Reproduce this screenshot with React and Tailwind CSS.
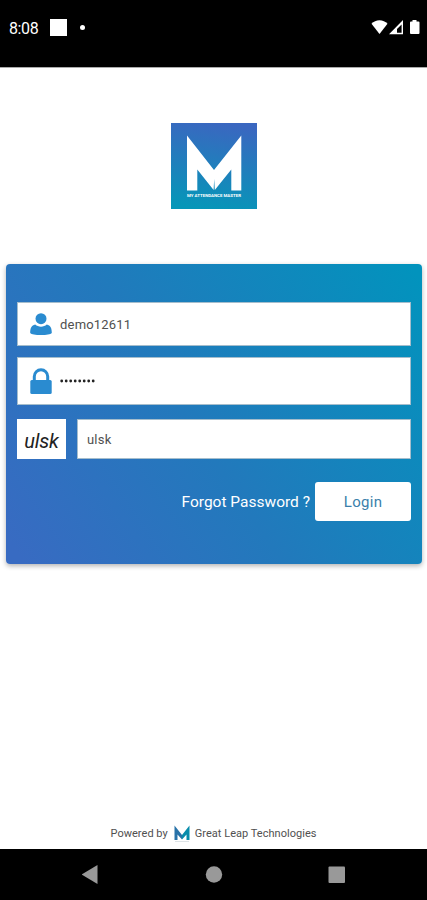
// ============================================
// Login screen - My Attendance Master
// ============================================

// White M, split into a left and a right half
const LogoMark = () => (
  <svg viewBox="0 0 86 86" className="w-[86px] h-[86px]">
    <defs>
      <linearGradient id="logoBg" x1="0.55" y1="0" x2="0.4" y2="1">
        <stop offset="0" stopColor="#3a67c0" />
        <stop offset="1" stopColor="#0696b8" />
      </linearGradient>
    </defs>
    <rect width="86" height="86" fill="url(#logoBg)" />
    <path
      fill="#fff"
      d="M16 12.5 43 47 70.300 12.500V67.500H60.300V46.500L43.800 67 43.200 56 42.600 67 26.300 46.500V67.500H16Z"
    />
    <text
      x="16"
      y="74.300"
      textLength="54"
      lengthAdjust="spacingAndGlyphs"
      fontSize="4"
      fontWeight="700"
      fill="#fff"
    >
      MY ATTENDANCE MASTER
    </text>
  </svg>
);

const SmallLogo = () => (
  <svg viewBox="0 0 16 18" className="w-4 h-[18px]">
    <path fill="#2872a8" d="M0.500 0.500 8 10V14.500L3.500 9.500V15H0.500Z" />
    <path fill="#078cab" d="M15.500 0.500 8 10V14.500L12.500 9.500V15H15.500Z" />
    <path stroke="#dde3e6" strokeWidth="1" d="M1 16.500H15" />
  </svg>
);

const UserIcon = () => (
  <svg viewBox="0 0 22 22" className="w-[22px] h-[22px]" fill="#2a8bd0">
    <circle cx="11" cy="5.700" r="5.500" />
    <path d="M5.200 11.500C6.800 12.900 8.700 13.700 11 13.700S15.200 12.900 16.800 11.500C20.500 12.300 21.800 15 21.800 20C20.500 21.500 16.500 22 11 22S1.500 21.500 0.200 20C0.200 15 1.500 12.300 5.200 11.500Z" />
  </svg>
);

const LockIcon = () => (
  <svg viewBox="0 0 22 26" className="w-[22px] h-[26px]">
    <path d="M4.300 13V8.500a6.700 6.700 0 0 1 13.400 0V13" fill="none" stroke="#2a8bd0" strokeWidth="3" />
    <rect x="0.300" y="12" width="21.400" height="14" rx="1.500" fill="#2a8bd0" />
  </svg>
);

// Masked password, one dot per character
const PasswordDots = () => (
  <svg viewBox="0 0 36 4" className="w-[36px] h-[4px] ml-[8px]" fill="#222">
    {Array.from({ length: 8 }, (_, i) => (
      <circle key={i} cx={1.7 + i * 4.5} cy="2" r="1.400" />
    ))}
  </svg>
);

const StatusBar = () => (
  <header className="h-[67px] shrink-0 bg-black flex items-start justify-between pt-[18px] pl-[9px] pr-[7px] text-white">
    <div className="flex items-center h-[19px]">
      <span className="w-[30px] pt-[2px] text-[16px] tracking-[-0.4px] leading-[19px] whitespace-nowrap">8:08</span>
      <span className="w-[17px] h-[17px] ml-[11px] bg-white" />
      <span className="w-[5px] h-[5px] ml-[13px] rounded-full bg-white" />
    </div>
    <svg viewBox="0 0 50 19" className="w-[50px] h-[19px]" fill="#fff">
      <path d="M1.500 5.800C5.500 1 13.500 1 17.500 5.800L9.500 16Z" />
      <path fillRule="evenodd" d="M33 2V16.300H19ZM31.600 6.500 27 11V14.800H31.600Z" />
      <path d="M42.500 2H46.500V3.500H48.500Q49.500 3.500 49.500 4.500V15Q49.500 16 48.500 16H41Q40 16 40 15V4.500Q40 3.500 41 3.500H42.500Z" />
    </svg>
  </header>
);

const LoginCard = () => (
  <section className="w-[416px] h-[300px] ml-[6px] mt-[55px] pt-[38px] px-[11px] rounded-[4px] bg-[linear-gradient(56deg,#386bc2_3%,#2279bc_45%,#0293bd_98%)] shadow-[0_2px_5px_rgba(0,0,0,0.3)]">
    <div className="h-[44px] pl-[12px] flex items-center bg-white border border-[#a5bdcc]">
      <UserIcon />
      <span className="ml-[8px] pt-[2px] text-[13px] tracking-[0.2px] text-[#505050]">demo12611</span>
    </div>
    <div className="h-[48px] mt-[11px] pl-[12px] flex items-center bg-white border border-[#a5bdcc]">
      <LockIcon />
      <PasswordDots />
    </div>
    <div className="mt-[14px] flex items-start gap-[11px]">
      <div className="w-[49px] h-[40px] pt-[3px] flex items-center justify-center bg-white text-[20px] tracking-[-0.2px] italic text-[#222]">
        ulsk
      </div>
      <div className="flex-1 h-[40px] pl-[9px] pt-[2px] flex items-center bg-white border border-[#a5bdcc] text-[13px] tracking-[0.2px] text-[#505050]">
        ulsk
      </div>
    </div>
    <div className="mt-[23px] flex items-center justify-end">
      <a className="mr-[5px] pt-[2px] text-[15.500px] text-white whitespace-nowrap">Forgot Password ?</a>
      <button className="w-[96px] h-[39px] pt-[2px] rounded-[3px] bg-white text-[15px] tracking-[0.3px] text-[#3b7fab]">
        Login
      </button>
    </div>
  </section>
);

const NavBar = () => (
  <nav className="h-[51px] shrink-0 bg-black flex justify-center">
    <svg viewBox="0 0 264 51" className="w-[264px] h-[51px]" fill="#999">
      <path d="M-0.500 25.500 15.500 16V35Z" />
      <circle cx="132" cy="25.500" r="8.200" />
      <rect x="246.500" y="17.500" width="16.500" height="16.500" rx="1" />
    </svg>
  </nav>
);

const App = () => (
  <div className="w-[427px] h-[900px] flex flex-col bg-white overflow-hidden font-['Roboto','Liberation_Sans',sans-serif]">
    <StatusBar />
    <main className="flex-1 flex flex-col border-t border-[#aaa]">
      <div className="mt-[55px] flex justify-center">
        <LogoMark />
      </div>
      <LoginCard />
      <footer className="mt-auto mb-[6px] flex items-center justify-center text-[11px] tracking-[0.03px] text-[#505050]">
        <span className="mr-[6px]">Powered by</span>
        <SmallLogo />
        <span className="ml-[5px]">Great Leap Technologies</span>
      </footer>
    </main>
    <NavBar />
  </div>
);

export default App;
